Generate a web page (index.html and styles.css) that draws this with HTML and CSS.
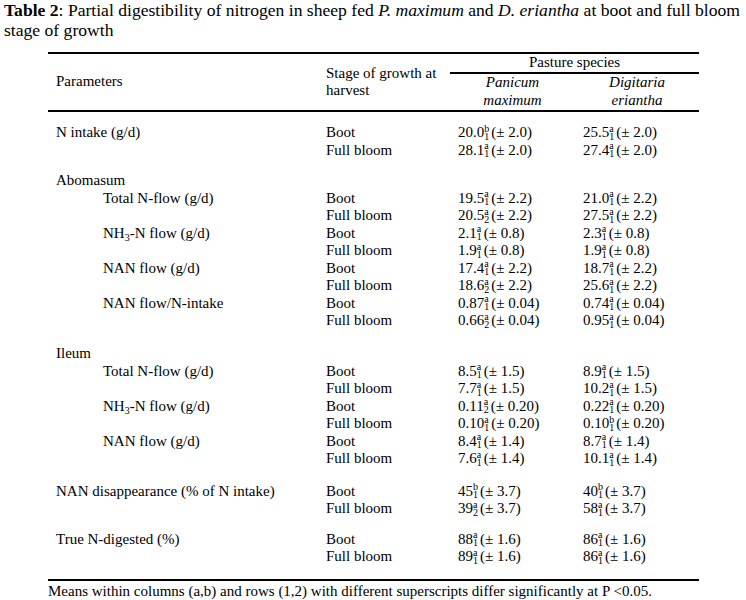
FILE: index.html
```html
<!DOCTYPE html>
<html>
<head>
<meta charset="utf-8">
<link rel="stylesheet" href="styles.css">
</head>
<body>
<p class="title"><b>Table 2</b>: Partial digestibility of nitrogen in sheep fed <i>P. maximum</i> and <i>D. eriantha</i> at boot and full bloom<br>stage of growth</p>
<table class="tbl">
<colgroup><col class="c1"><col class="c2"><col class="c3"><col class="c4"></colgroup>
<thead>
<tr class="h1"><th rowspan="2" class="param">Parameters</th><th rowspan="2" class="stage">Stage of growth at<br>harvest</th><th colspan="2" class="ps">Pasture species</th></tr>
<tr class="h2"><th class="sp">Panicum<br>maximum</th><th class="sp">Digitaria<br>eriantha</th></tr>
</thead>
<tbody>
<tr class="gap g0"><td colspan="4"></td></tr>
<tr><td>N intake (g/d)</td><td>Boot</td><td>20.0<span class="ss"><span>b</span><span>1</span></span>(± 2.0)</td><td>25.5<span class="ss"><span>a</span><span>1</span></span>(± 2.0)</td></tr>
<tr><td></td><td>Full bloom</td><td>28.1<span class="ss"><span>a</span><span>1</span></span>(± 2.0)</td><td>27.4<span class="ss"><span>a</span><span>1</span></span>(± 2.0)</td></tr>
<tr class="gap g1"><td colspan="4"></td></tr>
<tr><td>Abomasum</td><td></td><td></td><td></td></tr>
<tr><td class="ind">Total N-flow (g/d)</td><td>Boot</td><td>19.5<span class="ss"><span>a</span><span>1</span></span>(± 2.2)</td><td>21.0<span class="ss"><span>a</span><span>1</span></span>(± 2.2)</td></tr>
<tr><td></td><td>Full bloom</td><td>20.5<span class="ss"><span>a</span><span>2</span></span>(± 2.2)</td><td>27.5<span class="ss"><span>a</span><span>1</span></span>(± 2.2)</td></tr>
<tr><td class="ind">NH<sub>3</sub>-N flow (g/d)</td><td>Boot</td><td>2.1<span class="ss"><span>a</span><span>1</span></span>(± 0.8)</td><td>2.3<span class="ss"><span>a</span><span>1</span></span>(± 0.8)</td></tr>
<tr><td></td><td>Full bloom</td><td>1.9<span class="ss"><span>a</span><span>1</span></span>(± 0.8)</td><td>1.9<span class="ss"><span>a</span><span>1</span></span>(± 0.8)</td></tr>
<tr><td class="ind">NAN flow (g/d)</td><td>Boot</td><td>17.4<span class="ss"><span>a</span><span>1</span></span>(± 2.2)</td><td>18.7<span class="ss"><span>a</span><span>1</span></span>(± 2.2)</td></tr>
<tr><td></td><td>Full bloom</td><td>18.6<span class="ss"><span>a</span><span>2</span></span>(± 2.2)</td><td>25.6<span class="ss"><span>a</span><span>1</span></span>(± 2.2)</td></tr>
<tr><td class="ind">NAN flow/N-intake</td><td>Boot</td><td>0.87<span class="ss"><span>a</span><span>1</span></span>(± 0.04)</td><td>0.74<span class="ss"><span>a</span><span>1</span></span>(± 0.04)</td></tr>
<tr><td></td><td>Full bloom</td><td>0.66<span class="ss"><span>a</span><span>2</span></span>(± 0.04)</td><td>0.95<span class="ss"><span>a</span><span>1</span></span>(± 0.04)</td></tr>
<tr class="gap g2"><td colspan="4"></td></tr>
<tr><td>Ileum</td><td></td><td></td><td></td></tr>
<tr><td class="ind">Total N-flow (g/d)</td><td>Boot</td><td>8.5<span class="ss"><span>a</span><span>1</span></span>(± 1.5)</td><td>8.9<span class="ss"><span>a</span><span>1</span></span>(± 1.5)</td></tr>
<tr><td></td><td>Full bloom</td><td>7.7<span class="ss"><span>a</span><span>1</span></span>(± 1.5)</td><td>10.2<span class="ss"><span>a</span><span>1</span></span>(± 1.5)</td></tr>
<tr><td class="ind">NH<sub>3</sub>-N flow (g/d)</td><td>Boot</td><td>0.11<span class="ss"><span>a</span><span>2</span></span>(± 0.20)</td><td>0.22<span class="ss"><span>a</span><span>1</span></span>(± 0.20)</td></tr>
<tr><td></td><td>Full bloom</td><td>0.10<span class="ss"><span>a</span><span>1</span></span>(± 0.20)</td><td>0.10<span class="ss"><span>b</span><span>1</span></span>(± 0.20)</td></tr>
<tr><td class="ind">NAN flow (g/d)</td><td>Boot</td><td>8.4<span class="ss"><span>a</span><span>1</span></span>(± 1.4)</td><td>8.7<span class="ss"><span>a</span><span>1</span></span>(± 1.4)</td></tr>
<tr><td></td><td>Full bloom</td><td>7.6<span class="ss"><span>a</span><span>1</span></span>(± 1.4)</td><td>10.1<span class="ss"><span>a</span><span>1</span></span>(± 1.4)</td></tr>
<tr class="gap g3"><td colspan="4"></td></tr>
<tr><td>NAN disappearance (% of N intake)</td><td>Boot</td><td>45<span class="ss"><span>b</span><span>1</span></span>(± 3.7)</td><td>40<span class="ss"><span>b</span><span>1</span></span>(± 3.7)</td></tr>
<tr><td></td><td>Full bloom</td><td>39<span class="ss"><span>a</span><span>2</span></span>(± 3.7)</td><td>58<span class="ss"><span>a</span><span>1</span></span>(± 3.7)</td></tr>
<tr class="gap g4"><td colspan="4"></td></tr>
<tr><td>True N-digested (%)</td><td>Boot</td><td>88<span class="ss"><span>a</span><span>1</span></span>(± 1.6)</td><td>86<span class="ss"><span>a</span><span>1</span></span>(± 1.6)</td></tr>
<tr><td></td><td>Full bloom</td><td>89<span class="ss"><span>a</span><span>1</span></span>(± 1.6)</td><td>86<span class="ss"><span>a</span><span>1</span></span>(± 1.6)</td></tr>
<tr class="gap g5"><td colspan="4"></td></tr>
</tbody>
</table>
<p class="note">Means within columns (a,b) and rows (1,2) with different superscripts differ significantly at P &lt;0.05.</p>
</body>
</html>
```

FILE: styles.css
```css
html, body {
  margin: 0;
  padding: 0;
  background: #fff;
  color: #000;
  font-family: "Liberation Serif", "Times New Roman", serif;
}

.title {
  margin: 0 0 0 4px;
  width: 742px;
  font-size: 17.6px;
  line-height: 20px;
  white-space: nowrap;
}

.tbl {
  margin: 12px 0 0 48px;
  width: 651px;
  border-collapse: collapse;
  table-layout: fixed;
  font-size: 15px;
  line-height: 17.5px;
}

.c1 { width: 270px; }
.c2 { width: 132px; }
.c3 { width: 125px; }
.c4 { width: 124px; }

.tbl th,
.tbl td {
  padding: 0 0 0 8px;
  text-align: left;
  font-weight: normal;
  vertical-align: middle;
  white-space: nowrap;
}

.tbl thead tr.h1 th {
  border-top: 2px solid #000;
}

.tbl thead th.param,
.tbl thead th.stage {
  border-bottom: 2px solid #000;
}

.tbl th.ps {
  text-align: center;
  padding: 0;
  height: 18px;
  border-bottom: 2px solid #000;
}

.tbl th.sp {
  text-align: center;
  padding: 0 0 1px 0;
  font-style: italic;
  border-bottom: 2px solid #000;
}

.tbl td {
  height: 17.5px;
}

.tbl td.ind {
  padding-left: 55px;
}

.tbl tr.gap td {
  padding: 0;
}

.tbl tr.g0 td { height: 12px; }
.tbl tr.g1 td { height: 13px; }
.tbl tr.g2 td { height: 15.5px; }
.tbl tr.g3 td { height: 15px; }
.tbl tr.g4 td { height: 13px; }
.tbl tr.g5 td {
  height: 13px;
  border-bottom: 2px solid #000;
}

.ss {
  display: inline-flex;
  flex-direction: column;
  font-size: 10px;
  line-height: 8px;
  vertical-align: 5.5px;
  margin: -1px 2px -1px 0;
}

sub {
  font-size: 10px;
  line-height: 0;
  vertical-align: -3px;
}

.note {
  margin: 2px 0 0 48px;
  font-size: 15px;
  line-height: 17.5px;
}
```
